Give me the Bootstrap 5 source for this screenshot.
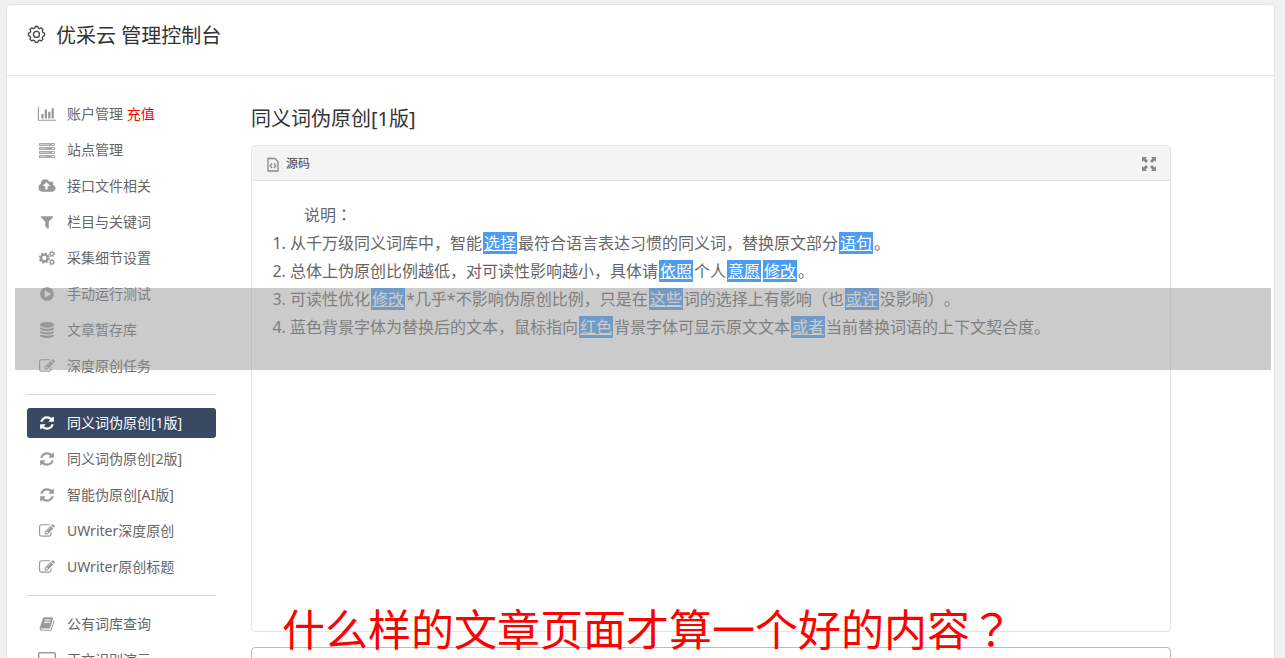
<!DOCTYPE html>
<html lang="zh-CN">
<head>
<meta charset="utf-8">
<meta name="viewport" content="width=device-width, initial-scale=1">
<title>优采云 管理控制台</title>
<link href="https://cdn.jsdelivr.net/npm/bootstrap@5.3.0/dist/css/bootstrap.min.css" rel="stylesheet">
<style>
body{font-family:"Noto Sans","Noto Sans CJK SC",sans-serif;font-size:14px;line-height:20px;color:#666;background:#f0f0f0}
.panel{margin:5px 11px 0 7px;background:#fff;box-shadow:0 0 0 1px #e4e4e4;border-radius:4px}
.panel-top{height:71px;padding:17px 20px 0;gap:9px;border-bottom:1px solid #e4e4e4;color:#333}
.panel-top svg{margin-top:3px}
.panel-top h1,.content h2{font-size:20px;line-height:28px;font-weight:400;color:#333}
.layout{padding:23px 103px 0 20px;gap:35px}
.side{flex:0 0 189px}
.side a{height:30px;margin-bottom:6px;padding:0 12px 0 10px;gap:10px;border-radius:3px;color:#666;text-decoration:none;white-space:nowrap}
.side a svg{width:20px;height:16px;fill:#999}
.side a.active{background:#394963;color:#fff}
.side a.active svg{fill:#fff}
.side hr{margin:13px 0;border-top:1px solid #d5d5d5;opacity:1}
.side .recharge{color:#f00}
.content h2{padding-top:6px;margin-bottom:12px}
.editor{border:1px solid #e4e4e4;border-radius:4px;margin-bottom:15px}
.tools{height:35px;padding:2px 14px 0;background:#f4f4f4;border-bottom:1px solid #e4e4e4}
.tools button{font-size:12px;color:#444;gap:6px}
.article{min-height:450px;padding:19px 20px;font-size:16px;line-height:28px;text-spacing-trim:space-all}
.article p{padding-left:32px}
.article ol{padding-left:18px}
.article li::marker{content:counter(list-item) ". "}
.swap{margin:0 1px;padding:0 1px;background:#4a9df5;color:#fff;text-decoration:underline}
.mid{font-family:"Noto Sans CJK TC",sans-serif}
.result{height:120px;border:1px solid #bbb;border-radius:4px;resize:none}
.band{left:15px;right:14px;top:288px;height:82px;background:rgba(151,151,151,.5);pointer-events:none}
.caption{left:282px;top:597px;font-size:43px;line-height:60px;color:#f00;white-space:nowrap}
</style>
</head>
<body class="position-relative vh-100 overflow-hidden">
<svg class="d-none" xmlns="http://www.w3.org/2000/svg">
<symbol id="chart" viewBox="0 0 2048 1792"><path d="M640 896v512h-256v-512h256zm384-512v1024h-256v-1024h256zm1024 1152v128h-2048v-1536h128v1408h1920zm-640-896v768h-256v-768h256zm384-384v1152h-256v-1152h256z"/></symbol>
<symbol id="server" viewBox="0 0 18 16"><g fill="#aaa"><rect x="1" y="1" width="16" height="3" rx=".5"/><rect x="1" y="5" width="16" height="3" rx=".5"/><rect x="1" y="9" width="16" height="3" rx=".5"/><rect x="1" y="13" width="16" height="3" rx=".5"/></g><path fill="#ccc" d="M2 2h9v1H2zM2 6h6v1H2zM2 10h9v1H2zM2 14h6v1H2z"/><path fill="#fff" d="M14 2h2v1h-2zM14 6h2v1h-2zM14 10h2v1h-2zM14 14h2v1h-2z"/></symbol>
<symbol id="cloud" viewBox="0 0 1920 1792"><path d="M1280 864q0-14-9-23l-352-352q-9-9-23-9t-23 9l-351 351q-10 12-10 24 0 14 9 23t23 9h224v352q0 13 9.500 22.500t22.500 9.500h192q13 0 22.500-9.500t9.500-22.500v-352h224q13 0 22.500-9.500t9.500-22.500zm640 288q0 159-112.500 271.500t-271.500 112.500h-1088q-185 0-316.500-131.500t-131.500-316.500q0-130 70-240t188-165q-2-30-2-43 0-212 150-362t362-150q156 0 285.500 87t188.500 231q71-62 166-62 106 0 181 75t75 181q0 76-41 138 130 31 213.500 135.500t83.500 238.500z"/></symbol>
<symbol id="filter" viewBox="0 0 1792 1792"><path d="M1595 295q17 41-14 70l-493 493v742q0 42-39 59-13 5-25 5-27 0-45-19l-256-256q-19-19-19-45v-486l-493-493q-31-29-14-70 17-39 59-39h1280q42 0 59 39z"/></symbol>
<symbol id="cogs" viewBox="0 0 20 18"><g fill="none" stroke="#999"><circle cx="7" cy="9" r="3.700" stroke-width="2.600"/><circle cx="7" cy="9" r="5.400" stroke-width="1.800" stroke-dasharray="2.200 2.040"/><circle cx="15.500" cy="4.300" r="1.900" stroke-width="1.400"/><circle cx="15.500" cy="4.300" r="3" stroke-width="1.200" stroke-dasharray="1.300 1.390"/><circle cx="15.500" cy="13.700" r="1.900" stroke-width="1.400"/><circle cx="15.500" cy="13.700" r="3" stroke-width="1.200" stroke-dasharray="1.300 1.390"/></g></symbol>
<symbol id="play" viewBox="0 0 1792 1792"><path d="M896 128q209 0 385.500 103t279.500 279.500 103 385.500-103 385.500-279.500 279.500-385.500 103-385.500-103-279.500-279.500-103-385.500 103-385.500 279.500-279.500 385.500-103zm384 823q32-18 32-55t-32-55l-544-320q-31-19-64-1-32 19-32 56v640q0 37 32 56 16 8 32 8 17 0 32-9z"/></symbol>
<symbol id="database" viewBox="0 0 1792 1792"><path d="M896 768q237 0 443-43t325-127v170q0 69-103 128t-280 93.500-385 34.500-385-34.500-280-93.500-103-128v-170q119 84 325 127t443 43zm0 768q237 0 443-43t325-127v170q0 69-103 128t-280 93.500-385 34.500-385-34.500-280-93.500-103-128v-170q119 84 325 127t443 43zm0-384q237 0 443-43t325-127v170q0 69-103 128t-280 93.500-385 34.500-385-34.500-280-93.500-103-128v-170q119 84 325 127t443 43zm0-1152q208 0 385 34.500t280 93.500 103 128v128q0 69-103 128t-280 93.500-385 34.500-385-34.500-280-93.500-103-128v-128q0-69 103-128t280-93.500 385-34.500z"/></symbol>
<symbol id="edit" viewBox="0 0 1792 1792"><path d="M888 1184l116-116-152-152-116 116v56h96v96h56zm440-720q-16-16-33 1l-350 350q-17 17-1 33t33-1l350-350q17-17 1-33zm80 594v190q0 119-84.500 203.500t-203.500 84.500h-832q-119 0-203.500-84.500t-84.500-203.500v-832q0-119 84.500-203.500t203.500-84.500h832q63 0 117 25 15 7 18 23 3 17-9 29l-49 49q-14 14-32 8-23-6-45-6h-832q-66 0-113 47t-47 113v832q0 66 47 113t113 47h832q66 0 113-47t47-113v-126q0-13 9-22l64-64q15-15 35-7t20 29zm-96-738l288 288-672 672h-288v-288zm444 132l-92 92-288-288 92-92q28-28 68-28t68 28l152 152q28 28 28 68t-28 68z"/></symbol>
<symbol id="refresh" viewBox="0 0 1792 1792"><path d="M1639 1056q0 5-1 7-64 268-268 434.500t-478 166.500q-146 0-282.500-55t-243.500-157l-129 129q-19 19-45 19t-45-19-19-45v-448q0-26 19-45t45-19h448q26 0 45 19t19 45-19 45l-137 137q71 66 161 102t187 36q134 0 250-65t186-179q11-17 53-117 8-23 30-23h192q13 0 22.500 9.500t9.500 22.500zm25-800v448q0 26-19 45t-45 19h-448q-26 0-45-19t-19-45 19-45l138-138q-148-137-349-137-134 0-250 65t-186 179q-11 17-53 117-8 23-30 23h-199q-13 0-22.500-9.500t-9.500-22.500v-7q65-268 270-434.500t480-166.500q146 0 284 55.500t245 156.500l130-129q19-19 45-19t45 19 19 45z"/></symbol>
<symbol id="book" viewBox="0 0 1792 1792"><path d="M1703 478q40 57 18 129l-275 906q-19 64-76.500 107.500t-122.500 43.500h-923q-77 0-148.500-53.500t-99.500-131.500q-24-67-2-127 0-4 3-27t4-37q1-8-3-21.500t-3-19.500q2-11 8-21t16.500-23.500 16.500-23.500q23-38 45-91.500t30-91.500q3-10 .5-30t-.5-28q3-11 17-28t17-23q21-36 42-92t25-90q1-9-2.500-32t.5-28q4-13 22-30.500t22-22.500q19-26 42.500-84.500t27.500-96.500q1-8-3-25.500t-2-26.500q2-8 9-18t18-23 17-21q8-12 16.500-30.500t15-35 16-36 19.500-32 26.500-23.500 36-11.500 47.500 5.500l-1 3q38-9 51-9h761q74 0 114 56t18 130l-274 906q-36 119-71.500 153.500t-128.500 34.500h-869q-27 0-38 15-11 16-1 43 24 70 144 70h923q29 0 56-15.500t35-41.500l300-987q7-22 5-57 38 15 59 43zm-1064 2q-4 13 2 22.500t20 9.500h608q13 0 25.500-9.500t16.500-22.500l21-64q4-13-2-22.500t-20-9.500h-608q-13 0-25.500 9.500t-16.500 22.500zm-83 256q-4 13 2 22.500t20 9.500h608q13 0 25.500-9.500t16.500-22.500l21-64q4-13-2-22.500t-20-9.500h-608q-13 0-25.500 9.500t-16.500 22.500z"/></symbol>
<symbol id="screen" viewBox="0 0 20 16"><path fill="none" stroke="#999" stroke-width="1.500" d="M3 .75h14q1.300 0 1.300 1.300v9q0 1.300-1.300 1.300H3q-1.300 0-1.300-1.300v-9q0-1.300 1.300-1.300zM6 15h8M10 12v3"/></symbol>
</svg>

<div class="panel">
  <header class="panel-top d-flex align-items-start">
    <svg class="flex-shrink-0" width="20" height="20" viewBox="0 0 20 20" fill="none" stroke="#444" stroke-width="1.300"><path stroke-linejoin="round" d="M8.300 1.500h2.400l.6 1.600 1.300.6 1.700-.8 1.600 1.600-.6 1.700.6 1.300 1.600.7v2.400l-1.600.7-.6 1.300.6 1.700-1.600 1.600-1.700-.7-1.300.6-.6 1.600H8.300l-.7-1.600-1.300-.6-1.700.7L3 14.300l.7-1.700-.6-1.300-1.600-.7V8.200l1.600-.7.6-1.300L3 4.500l1.600-1.600 1.700.8 1.300-.6z"/><circle cx="9.500" cy="9.400" r="3"/></svg>
    <h1 class="mb-0">优采云 管理控制台</h1>
  </header>
  <div class="layout d-flex">
    <nav class="side" aria-label="功能菜单">
      <a href="#" class="d-flex align-items-center"><svg><use href="#chart"/></svg><span>账户管理 <span class="recharge">充值</span></span></a>
      <a href="#" class="d-flex align-items-center"><svg><use href="#server"/></svg><span>站点管理</span></a>
      <a href="#" class="d-flex align-items-center"><svg><use href="#cloud"/></svg><span>接口文件相关</span></a>
      <a href="#" class="d-flex align-items-center"><svg><use href="#filter"/></svg><span>栏目与关键词</span></a>
      <a href="#" class="d-flex align-items-center"><svg><use href="#cogs"/></svg><span>采集细节设置</span></a>
      <a href="#" class="d-flex align-items-center"><svg><use href="#play"/></svg><span>手动运行测试</span></a>
      <a href="#" class="d-flex align-items-center"><svg><use href="#database"/></svg><span>文章暂存库</span></a>
      <a href="#" class="d-flex align-items-center"><svg><use href="#edit"/></svg><span>深度原创任务</span></a>
      <hr>
      <a href="#" class="d-flex align-items-center active" aria-current="page"><svg><use href="#refresh"/></svg><span>同义词伪原创[1版]</span></a>
      <a href="#" class="d-flex align-items-center"><svg><use href="#refresh"/></svg><span>同义词伪原创[2版]</span></a>
      <a href="#" class="d-flex align-items-center"><svg><use href="#refresh"/></svg><span>智能伪原创[AI版]</span></a>
      <a href="#" class="d-flex align-items-center"><svg><use href="#edit"/></svg><span>UWriter深度原创</span></a>
      <a href="#" class="d-flex align-items-center"><svg><use href="#edit"/></svg><span>UWriter原创标题</span></a>
      <hr>
      <a href="#" class="d-flex align-items-center"><svg><use href="#book"/></svg><span>公有词库查询</span></a>
      <a href="#" class="d-flex align-items-center"><svg><use href="#screen"/></svg><span>正文识别演示</span></a>
    </nav>
    <main class="content flex-grow-1">
      <h2>同义词伪原创[1版]</h2>
      <section class="editor">
        <div class="tools d-flex align-items-center justify-content-between">
          <button type="button" class="btn p-0 border-0 d-flex align-items-center"><svg width="14" height="16" viewBox="0 0 14 16" fill="none" stroke="#888" stroke-width="1.300"><path d="M2 2.500h7l3 3V15H2z"/><path d="M6 7.500L4.200 9.700 6 12M8 7.500l1.800 2.200L8 12"/></svg><span>源码</span></button>
          <button type="button" class="btn p-0 border-0 d-flex" aria-label="全屏"><svg width="14" height="14" viewBox="0 0 14 14" fill="#888"><path d="M0 0h5L3.600 1.500 6 4 4 6 1.500 3.600 0 5zM14 0v5l-1.500-1.400L10 6 8 4l2.400-2.500L9 0zM0 14V9l1.500 1.400L4 8l2 2-2.400 2.500L5 14zM14 14H9l1.400-1.500L8 10l2-2 2.500 2.400L14 9z"/></svg></button>
        </div>
        <div class="article">
          <p class="mb-0">说明<span class="mid" lang="zh-TW">：</span></p>
          <ol class="mb-0">
            <li>从千万级同义词库中，智能<span class="swap">选择</span>最符合语言表达习惯的同义词，替换原文部分<span class="swap">语句</span>。</li>
            <li>总体上伪原创比例越低，对可读性影响越小，具体请<span class="swap">依照</span>个人<span class="swap">意愿</span><span class="swap">修改</span>。</li>
            <li>可读性优化<span class="swap">修改</span>*几乎*不影响伪原创比例，只是在<span class="swap">这些</span>词的选择上有影响（也<span class="swap">或许</span>没影响）。</li>
            <li>蓝色背景字体为替换后的文本，鼠标指向<span class="swap">红色</span>背景字体可显示原文文本<span class="swap">或者</span>当前替换词语的上下文契合度。</li>
          </ol>
        </div>
      </section>
      <textarea class="result d-block w-100" aria-label="结果"></textarea>
    </main>
  </div>
</div>
<div class="band position-absolute"></div>
<div class="caption position-absolute">什么样的文章页面才算一个好的内容<span class="mid" lang="zh-TW">？</span></div>
<script src="https://cdn.jsdelivr.net/npm/bootstrap@5.3.0/dist/js/bootstrap.bundle.min.js"></script>
</body>
</html>
